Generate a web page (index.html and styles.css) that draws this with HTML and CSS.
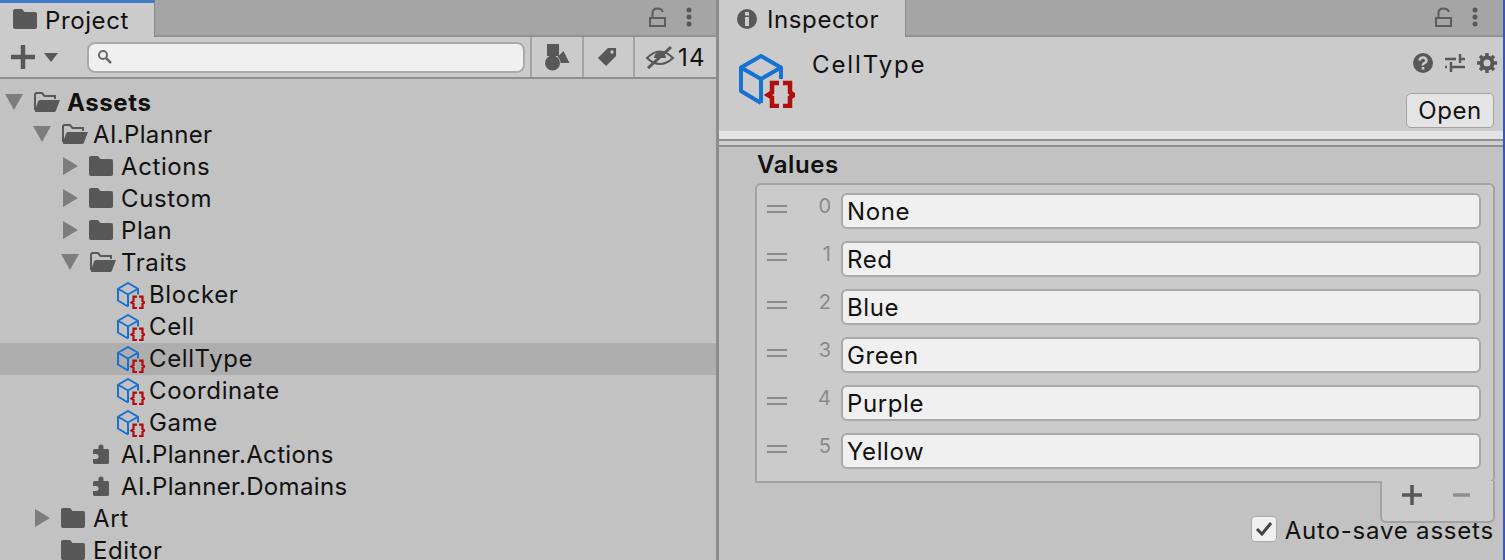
FILE: index.html
```html
<!DOCTYPE html>
<html lang="en">

<head>
    <meta charset="UTF-8">
    <title>Project / Inspector</title>
    <link rel="stylesheet" href="styles.css">
</head>

<body>
    <svg class="defs" width="0" height="0">
        <symbol id="folder" viewBox="0 0 24 20">
            <path d="M0 2Q0 0 2 0H9L11.500 3H22Q24 3 24 5V18Q24 20 22 20H2Q0 20 0 18Z" fill="#585858"/>
        </symbol>
        <symbol id="folderOpen" viewBox="0 0 28 20">
            <path d="M2 18V3Q2 1 3.500 1H9L11.500 4H22V7" fill="none" stroke="#585858" stroke-width="2"/>
            <path d="M7 8H27L23 18.500Q22.500 20 21 20H3Q1.500 20 2 18.500L5 9.500Q5.500 8 7 8Z" fill="#585858"/>
        </symbol>
        <symbol id="script" viewBox="0 0 56 54">
            <path d="M42 25V13.500L22 2L2 13.500V37L22 49M2 13.500L22 25L42 13.500M22 25V49" fill="none" stroke="#1672d2" stroke-width="4" stroke-linejoin="round"/>
            <path d="M40 29H33V38.500L29 41L33 43.500V52H40M44 29H51V38.500L55 41L51 43.500V52H44" fill="none" stroke="#b00f0f" stroke-width="4.500"/>
        </symbol>
        <symbol id="puzzle" viewBox="0 0 16 20">
            <path d="M5.500 5V3Q5.500 0.500 8 0.500T10.500 3V5H14.500Q16 5 16 6.500V18.500Q16 20 14.500 20H1.500Q0 20 0 18.500V15H3Q5.500 15 5.500 12.500T3 10H0V6.500Q0 5 1.500 5Z" fill="#585858"/>
        </symbol>
        <symbol id="lock" viewBox="0 0 17 20">
            <path d="M1 11H16V19H1ZM3.500 11V6Q3.500 1.500 8.500 1.500T13.500 5" fill="none" stroke="#5d5d5d" stroke-width="2"/>
        </symbol>
        <symbol id="dots" viewBox="0 0 6 20">
            <circle cx="3" cy="3" r="2.500" fill="#585858"/>
            <circle cx="3" cy="10" r="2.500" fill="#585858"/>
            <circle cx="3" cy="17" r="2.500" fill="#585858"/>
        </symbol>
    </svg>

    <div class="window">
        <!-- Project panel -->
        <section class="panel project">
            <div class="tabBar">
                <div class="tab tabActive">
                    <svg class="tabIcon" width="24" height="20"><use href="#folder"/></svg>
                    <span>Project</span>
                </div>
                <div class="tabTools">
                    <svg width="17" height="20"><use href="#lock"/></svg>
                    <svg width="6" height="20"><use href="#dots"/></svg>
                </div>
            </div>

            <div class="toolbar">
                <div class="addMenu">
                    <svg width="24" height="24" viewBox="0 0 24 24"><path d="M12 0V24M0 12H24" stroke="#585858" stroke-width="4.500"/></svg>
                    <span class="caret"></span>
                </div>
                <div class="search">
                    <svg width="16" height="16" viewBox="0 0 16 16"><circle cx="6" cy="6" r="4" fill="none" stroke="#6a6a6a" stroke-width="2"/><path d="M9 9L14 14" stroke="#6a6a6a" stroke-width="2.500"/></svg>
                </div>
                <div class="toolBtn btnType">
                    <svg width="26" height="28" viewBox="0 0 26 28"><rect x="3" y="1" width="12" height="12" fill="#585858"/><circle cx="8.500" cy="20" r="7.500" fill="#585858"/><path d="M19.500 8L25.500 20H16.500Q16.500 16 13.500 14Z" fill="#585858"/></svg>
                </div>
                <div class="toolBtn btnLabel">
                    <svg width="20" height="20" viewBox="0 0 22 22"><path d="M12 1H21V10L10 21L1 12Z" fill="#585858"/><circle cx="16.500" cy="5.500" r="1.800" fill="#cbcbcb"/></svg>
                </div>
                <div class="toolBtn btnHidden">
                    <svg width="30" height="24" viewBox="0 0 30 24"><path d="M2 13Q15 0 28 13Q15 25 2 13Z" fill="none" stroke="#585858" stroke-width="2"/><path d="M9 13A6 6 0 0 1 21 13Z" fill="#585858"/><path d="M3 23L26 2" stroke="#585858" stroke-width="3"/></svg>
                    <span class="hiddenCount">14</span>
                </div>
            </div>

            <div class="tree">
                <div class="row lvl0 bold"><span class="arrow down"></span><svg class="icon openIcon" width="28" height="20"><use href="#folderOpen"/></svg><span>Assets</span></div>
                <div class="row lvl1 tight"><span class="arrow down"></span><svg class="icon openIcon" width="28" height="20"><use href="#folderOpen"/></svg><span>AI.Planner</span></div>
                <div class="row lvl2"><span class="arrow right"></span><svg class="icon" width="24" height="20"><use href="#folder"/></svg><span>Actions</span></div>
                <div class="row lvl2"><span class="arrow right"></span><svg class="icon" width="24" height="20"><use href="#folder"/></svg><span>Custom</span></div>
                <div class="row lvl2"><span class="arrow right"></span><svg class="icon" width="24" height="20"><use href="#folder"/></svg><span>Plan</span></div>
                <div class="row lvl2"><span class="arrow down"></span><svg class="icon openIcon" width="28" height="20"><use href="#folderOpen"/></svg><span>Traits</span></div>
                <div class="row lvl3"><svg class="icon" width="28" height="27"><use href="#script"/></svg><span>Blocker</span></div>
                <div class="row lvl3"><svg class="icon" width="28" height="27"><use href="#script"/></svg><span>Cell</span></div>
                <div class="row lvl3 selected"><svg class="icon" width="28" height="27"><use href="#script"/></svg><span>CellType</span></div>
                <div class="row lvl3"><svg class="icon" width="28" height="27"><use href="#script"/></svg><span>Coordinate</span></div>
                <div class="row lvl3"><svg class="icon" width="28" height="27"><use href="#script"/></svg><span>Game</span></div>
                <div class="row lvlAsm tight"><svg class="icon" width="16" height="20"><use href="#puzzle"/></svg><span>AI.Planner.Actions</span></div>
                <div class="row lvlAsm tight"><svg class="icon" width="16" height="20"><use href="#puzzle"/></svg><span>AI.Planner.Domains</span></div>
                <div class="row lvl1"><span class="arrow right"></span><svg class="icon" width="24" height="20"><use href="#folder"/></svg><span>Art</span></div>
                <div class="row lvl1"><span class="arrow none"></span><svg class="icon" width="24" height="20"><use href="#folder"/></svg><span>Editor</span></div>
            </div>
        </section>

        <!-- Inspector panel -->
        <section class="panel inspector">
            <div class="tabBar">
                <div class="tab tabInspector">
                    <svg class="tabIcon" width="20" height="20" viewBox="0 0 20 20"><circle cx="10" cy="10" r="10" fill="#585858"/><rect x="8" y="3" width="4" height="3.500" fill="#cbcbcb"/><rect x="8" y="8" width="4" height="9" fill="#cbcbcb"/></svg>
                    <span>Inspector</span>
                </div>
                <div class="tabTools">
                    <svg width="17" height="20"><use href="#lock"/></svg>
                    <svg width="6" height="20"><use href="#dots"/></svg>
                </div>
            </div>

            <div class="assetHeader">
                <svg class="assetIcon" width="56" height="54"><use href="#script"/></svg>
                <div class="assetName">CellType</div>
                <div class="assetSide">
                    <div class="assetTools">
                        <svg width="20" height="20" viewBox="0 0 20 20"><circle cx="10" cy="10" r="10" fill="#585858"/><path d="M6.500 7.500Q7 4.500 10 4.500T13.500 7.500Q13.500 9 11.500 10T10 12.500" fill="none" stroke="#cbcbcb" stroke-width="2.500"/><rect x="8.700" y="14" width="2.600" height="2.600" fill="#cbcbcb"/></svg>
                        <svg width="20" height="20" viewBox="0 0 20 20"><path d="M0 6H11M15 1V10M15 6H20M0 14H2M6 9V19M6 14H20" stroke="#585858" stroke-width="2.400" fill="none"/></svg>
                        <svg width="20" height="20" viewBox="0 0 20 20"><circle cx="10" cy="10" r="5.500" fill="none" stroke="#585858" stroke-width="4"/><path d="M10 0V20M0 10H20M3 3L17 17M17 3L3 17" stroke="#585858" stroke-width="3.500" stroke-dasharray="3.500 13 3.500"/></svg>
                    </div>
                    <div class="openBtn">Open</div>
                </div>
            </div>
            <div class="headerStrip"></div>
            <div class="headerGap"></div>

            <div class="inspectorBody">
                <div class="valuesLabel">Values</div>
                <div class="list">
                    <div class="listRow"><span class="handle"></span><span class="index">0</span><div class="field">None</div></div>
                    <div class="listRow"><span class="handle"></span><span class="index">1</span><div class="field">Red</div></div>
                    <div class="listRow"><span class="handle"></span><span class="index">2</span><div class="field">Blue</div></div>
                    <div class="listRow"><span class="handle"></span><span class="index">3</span><div class="field">Green</div></div>
                    <div class="listRow"><span class="handle"></span><span class="index">4</span><div class="field">Purple</div></div>
                    <div class="listRow"><span class="handle"></span><span class="index">5</span><div class="field">Yellow</div></div>
                </div>
                <div class="listFooter">
                    <svg width="20" height="20" viewBox="0 0 20 20"><path d="M10 0V20M0 10H20" stroke="#585858" stroke-width="3.500"/></svg>
                    <svg class="minus" width="17" height="4" viewBox="0 0 17 4"><path d="M0 2H17" stroke="#8f8f8f" stroke-width="3.500"/></svg>
                </div>
                <div class="autoSave">
                    <span class="checkbox">
                        <svg width="18" height="16" viewBox="0 0 18 16"><path d="M2 8L7 13L16 2" fill="none" stroke="#444" stroke-width="3"/></svg>
                    </span>
                    <span class="autoLabel">Auto-save assets</span>
                </div>
            </div>
        </section>
    </div>
</body>

</html>
```

FILE: styles.css
```css
body {
    margin: 0;
    height: 560px;
    overflow: hidden;
    font-family: 'Inter', 'Liberation Sans', sans-serif;
    font-size: 24px;
    letter-spacing: 0.6px;
    color: #111;
    background-color: #c2c2c2;
}

.defs {
    position: absolute;
}

.window {
    display: flex;
    height: 560px;
    background-color: #8c8c8c;
}

.panel {
    display: flex;
    flex-direction: column;
    background-color: #c2c2c2;
    overflow: hidden;
}

.project {
    width: 716px;
}

.inspector {
    width: 786px;
    box-sizing: border-box;
    margin-left: 3px;
    border-right: 2px solid #3d55b5;
}

.tabBar {
    display: flex;
    justify-content: space-between;
    align-items: flex-start;
    height: 37px;
    box-sizing: border-box;
    flex-shrink: 0;
    background-color: #a5a5a5;
    border-bottom: 2px solid #929292;
}

.tab {
    display: flex;
    align-items: center;
    height: 37px;
    box-sizing: border-box;
    background-color: #cbcbcb;
}

.tabActive {
    width: 155px;
    padding-left: 13px;
    gap: 8px;
    border-top: 3px solid #3f7bc9;
    border-right: 1px solid #8c8c8c;
}

.tabIcon {
    margin-top: -2px;
}

.tabInspector {
    width: 187px;
    padding: 2px 0 0 18px;
    gap: 10px;
    border-right: 1px solid #8c8c8c;
}

.tabTools {
    display: flex;
    align-items: center;
    gap: 20px;
    height: 34px;
    padding-right: 24px;
}

.inspector .tabTools {
    padding-right: 25px;
}

.toolbar {
    display: flex;
    align-items: center;
    height: 40px;
    flex-shrink: 0;
    background-color: #cbcbcb;
    border-bottom: 2px solid #8f8f8f;
}

.addMenu {
    display: flex;
    align-items: center;
    width: 87px;
    box-sizing: border-box;
    padding-left: 11px;
    gap: 9px;
}

.caret {
    width: 0;
    height: 0;
    border-left: 7px solid transparent;
    border-right: 7px solid transparent;
    border-top: 9px solid #585858;
}

.search {
    display: flex;
    align-items: center;
    width: 438px;
    height: 31px;
    box-sizing: border-box;
    padding-left: 8px;
    background-color: #f0f0f0;
    border: 2px solid #aaa;
    border-radius: 8px;
}

.toolBtn {
    display: flex;
    align-items: center;
    justify-content: center;
    height: 40px;
    box-sizing: border-box;
    border-left: 2px solid #a3a3a3;
}

.btnType {
    margin-left: 5px;
    width: 52px;
}

.btnLabel {
    width: 51px;
    padding-right: 3px;
}

.btnHidden {
    width: 83px;
    gap: 3px;
}

.hiddenCount {
    letter-spacing: 1.4px;
}

.tree {
    padding-top: 8px;
}

.row {
    display: flex;
    align-items: center;
    height: 32px;
    box-sizing: border-box;
    padding-bottom: 2px;
}

.selected {
    background-color: #aeaeae;
}

.bold {
    font-weight: 700;
}

.tight {
    letter-spacing: 0.35px;
}

.lvl0 { padding-left: 5px; }
.lvl1 { padding-left: 33px; }
.lvl2 { padding-left: 61px; }
.lvl3 { padding-left: 117px; }
.lvlAsm { padding-left: 93px; }

.arrow {
    width: 28px;
    flex-shrink: 0;
    box-sizing: border-box;
}

.arrow.down {
    height: 0;
    width: 0;
    margin-right: 10px;
    border-left: 9px solid transparent;
    border-right: 9px solid transparent;
    border-top: 16px solid #7d7d7d;
}

.arrow.right {
    height: 0;
    width: 0;
    margin: 0 11px 0 2px;
    border-top: 9px solid transparent;
    border-bottom: 9px solid transparent;
    border-left: 15px solid #7d7d7d;
}

.icon {
    flex-shrink: 0;
    margin-right: 8px;
}

.openIcon {
    margin-right: 4px;
}

.bold .openIcon {
    margin-right: 6px;
}

.lvl3 .icon {
    margin: 2px 4px 0 0;
}

.lvlAsm .icon {
    margin-right: 12px;
}

.assetHeader {
    display: flex;
    height: 94px;
    flex-shrink: 0;
    background-color: #cbcbcb;
}

.assetIcon {
    margin: 17px 0 0 20px;
}

.assetName {
    margin: 13px 0 0 17px;
    flex: 1;
    letter-spacing: 1.9px;
}

.assetSide {
    display: flex;
    flex-direction: column;
    align-items: flex-end;
    padding-right: 6px;
}

.assetTools {
    display: flex;
    gap: 12px;
    margin-top: 16px;
}

.openBtn {
    width: 88px;
    height: 35px;
    margin: 20px 3px 0 0;
    line-height: 34px;
    text-align: center;
    background-color: #e4e4e4;
    border: 1px solid #a3a3a3;
    border-radius: 5px;
    box-sizing: border-box;
}

.headerStrip {
    height: 10px;
    box-sizing: border-box;
    flex-shrink: 0;
    background-color: #e4e4e4;
    border-bottom: 2px solid #8f8f8f;
}

.headerGap {
    height: 6px;
    box-sizing: border-box;
    flex-shrink: 0;
    background-color: #cfcfcf;
    border-bottom: 2px solid #8f8f8f;
}

.inspectorBody {
    display: flex;
    flex-direction: column;
    padding: 0 8px 0 36px;
}

.valuesLabel {
    height: 36px;
    line-height: 36px;
    padding-left: 2px;
    font-weight: 600;
}

.list {
    height: 300px;
    box-sizing: border-box;
    padding-top: 2px;
    background-color: #cbcbcb;
    border: 2px solid #a3a3a3;
    border-radius: 6px 6px 6px 0;
}

.listRow {
    display: flex;
    align-items: center;
    height: 48px;
}

.handle {
    width: 20px;
    height: 8px;
    margin: -4px 0 0 10px;
    border-top: 2px solid #8a8a8a;
    border-bottom: 2px solid #8a8a8a;
    box-sizing: border-box;
}

.index {
    width: 44px;
    margin: -10px 10px 0 0;
    text-align: right;
    font-size: 20px;
    letter-spacing: 0;
    color: #8a8a8a;
}

.field {
    width: 640px;
    height: 36px;
    box-sizing: border-box;
    line-height: 33px;
    padding-left: 4px;
    background-color: #f0f0f0;
    border: 2px solid #aaa;
    border-radius: 6px;
}

.listFooter {
    display: flex;
    align-items: flex-start;
    align-self: flex-end;
    gap: 31px;
    width: 115px;
    height: 42px;
    box-sizing: border-box;
    margin-top: -2px;
    padding: 4px 0 0 20px;
    background-color: #cbcbcb;
    border: 2px solid #a3a3a3;
    border-top: none;
    border-radius: 0 0 6px 6px;
}

.minus {
    margin-top: 8px;
}

.autoSave {
    display: flex;
    align-items: center;
    align-self: flex-end;
    gap: 8px;
    margin: -11px 1px 0 0;
}

.autoLabel {
    padding-top: 4px;
    letter-spacing: 0.8px;
}

.checkbox {
    display: flex;
    align-items: center;
    justify-content: center;
    width: 26px;
    height: 26px;
    box-sizing: border-box;
    background-color: #f0f0f0;
    border: 1px solid #aaa;
    border-radius: 4px;
}
```
